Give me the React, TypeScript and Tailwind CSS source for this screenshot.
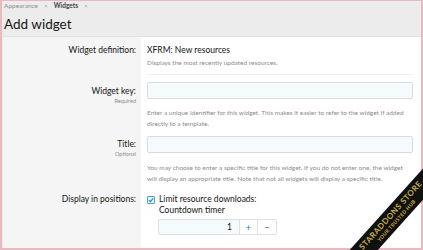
import React from "react";

const font = { fontFamily: 'Lato, "Noto Sans", sans-serif' };

function Ribbon() {
    return (
        <div className="absolute right-[-70px] bottom-[22px] w-[200px] rotate-[-48deg] bg-[#111] py-[2px] text-center text-[#c9b04a] pointer-events-none">
            <div className="text-[8px] leading-[10px] font-bold tracking-[0.5px]">STARADDONS STORE</div>
            <div className="text-[5px] leading-[7px] font-bold tracking-[0.3px]">YOUR TRUSTED HUB</div>
        </div>
    );
}

export default function App() {
    return (
        <div className="w-[423px] h-[250px] overflow-hidden relative bg-[#f3d5da]" style={font}>
            <div className="absolute inset-0 border-l-[2px] border-r-[2px] border-t-[1px] border-b-[2px] border-[#e9b8c0]" />
            <div className="h-full mx-[2px] mt-[1px] bg-[#ececec] flex flex-col">
                <div className="pl-[2px] pt-[0px] text-[6.5px] leading-[10px] text-[#8f8f8f] flex gap-[6px]">
                    <span>Appearance</span><span>&gt;</span><span className="text-[#454545] font-bold">Widgets</span><span>&gt;</span>
                </div>
                <div className="pl-[2px] pt-[2px] text-[13.5px] leading-[22px] text-[#141414]">Add widget</div>
                <div className="mt-[1px] ml-[1px] flex-1 flex flex-col bg-white border-t border-[#e2e2e2]">
                    <div className="flex">
                        <div className="w-[138px] shrink-0 bg-[#f5f5f5] pr-[5px] pt-[7px] text-right text-[8.5px] leading-[12px] text-[#141414]">Widget definition:</div>
                        <div className="flex-1 pl-[6px] pt-[7px] pr-[8px]">
                            <div className="text-[8.5px] leading-[12px] text-[#141414]">XFRM: New resources</div>
                            <div className="mt-[1px] text-[6.5px] leading-[12px] text-[#8c8c8c]">Displays the most recently updated resources.</div>
                            <div className="mt-[5px] border-t border-[#eeeeee]" />
                        </div>
                    </div>
                    <div className="flex">
                        <div className="w-[138px] shrink-0 bg-[#f5f5f5] pr-[5px] pt-[10px] text-right">
                            <div className="text-[8.5px] leading-[12px] text-[#141414]">Widget key:</div>
                            <div className="text-[5.5px] leading-[8px] text-[#8c8c8c]">Required</div>
                        </div>
                        <div className="flex-1 pl-[6px] pt-[7px] pr-[8px]">
                            <div className="h-[17px] border border-[#dcdcdc] bg-[#f5fbfd] rounded-[2px]" />
                            <div className="mt-[8px] text-[6.5px] leading-[11px] text-[#8c8c8c]">Enter a unique identifier for this widget. This makes it easier to refer to the widget if added directly to a template.</div>
                        </div>
                    </div>
                    <div className="flex">
                        <div className="w-[138px] shrink-0 bg-[#f5f5f5] pr-[5px] pt-[9px] text-right">
                            <div className="text-[8.5px] leading-[12px] text-[#141414]">Title:</div>
                            <div className="text-[5.5px] leading-[8px] text-[#8c8c8c]">Optional</div>
                        </div>
                        <div className="flex-1 pl-[6px] pt-[7px] pr-[8px]">
                            <div className="h-[17px] border border-[#dcdcdc] bg-[#f5fbfd] rounded-[2px]" />
                            <div className="mt-[9px] text-[6.5px] leading-[11px] text-[#8c8c8c]">You may choose to enter a specific title for this widget. If you do not enter one, the widget will display an appropriate title. Note that not all widgets will display a specific title.</div>
                        </div>
                    </div>
                    <div className="flex flex-1">
                        <div className="w-[138px] shrink-0 bg-[#f5f5f5] pr-[5px] pt-[10px] text-right text-[8.5px] leading-[11px] text-[#141414]">Display in positions:</div>
                        <div className="flex-1 pl-[6px] pt-[10px] pr-[8px]">
                            <div className="flex items-start gap-[4px]">
                                <div className="mt-[2px] w-[8px] h-[8px] border border-[#4aa3c9] bg-[#e6f3f9] rounded-[1px] flex items-center justify-center">
                                    <svg width="6" height="6" viewBox="0 0 8 8"><path d="M1.3 4.2 L3.3 6.2 L6.8 1.8" fill="none" stroke="#2b86b4" strokeWidth="1.4" /></svg>
                                </div>
                                <div className="text-[8.5px] leading-[11px] text-[#141414]">
                                    <div>Limit resource downloads:</div>
                                    <div>Countdown timer</div>
                                </div>
                            </div>
                            <div className="ml-[11px] mt-[3px] w-[119px] h-[16px] flex border border-[#e0e0e0] rounded-[2px] bg-[#f5fbfd] text-[8.5px]">
                                <div className="flex-1 text-right pr-[7px] leading-[14px] text-[#141414]">1</div>
                                <div className="w-[18px] border-l border-[#e0e0e0] bg-white flex items-center justify-center text-[#2b86b4] text-[10px] leading-none">+</div>
                                <div className="w-[19px] border-l border-[#e0e0e0] bg-white flex items-center justify-center text-[#2b86b4] text-[10px] leading-none">−</div>
                            </div>
                        </div>
                    </div>
                </div>
            </div>
            <Ribbon />
        </div>
    );
}
